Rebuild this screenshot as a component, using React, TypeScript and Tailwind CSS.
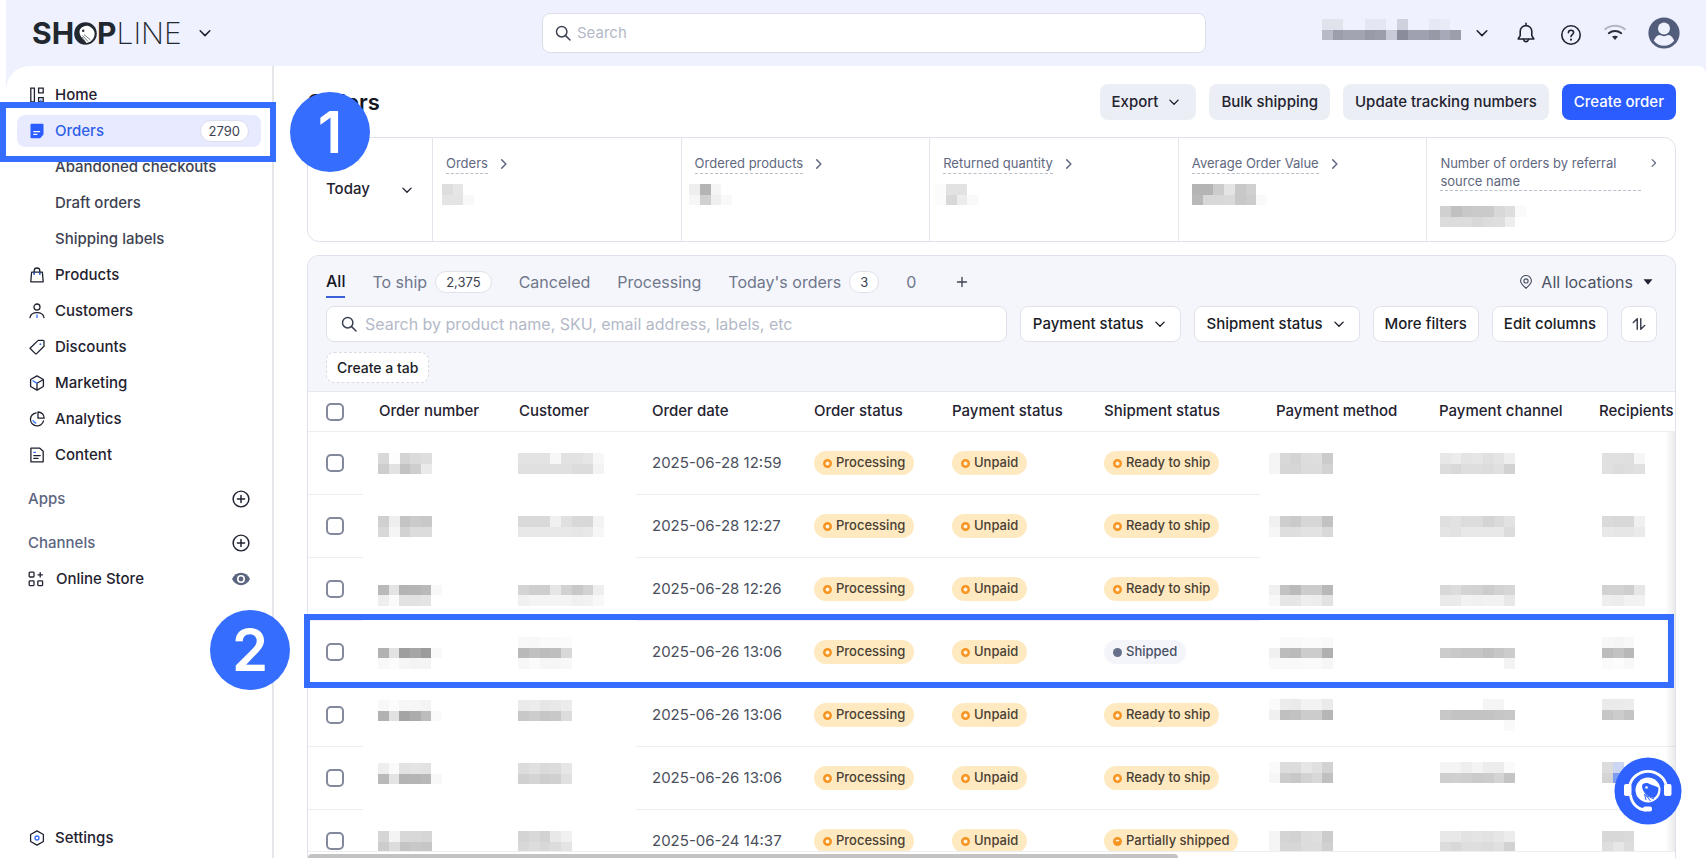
import type { ReactNode } from "react";

const BLOCK = 11;

// Redacted value, each string is a row of two digit grey levels
const Mosaic = ({ rows, className = "" }: { rows: string[]; className?: string }) => {
  const grid = rows.map((row) => row.split(" "));
  const cols = Math.max(...grid.map((row) => row.length));
  return (
    <svg
      className={`block shrink-0 ${className}`}
      width={Math.round(cols * 10.73)}
      height={Math.round(rows.length * 10.73)}
      viewBox={`0 0 ${cols * BLOCK} ${rows.length * BLOCK}`}
      preserveAspectRatio="none"
      shapeRendering="crispEdges"
      aria-hidden="true"
    >
      {grid.map((row, y) =>
        row.map((level, x) =>
          level === "--" ? null : (
            <rect
              key={`${x}-${y}`}
              x={x * BLOCK}
              y={y * BLOCK}
              width={BLOCK}
              height={BLOCK}
              fill={level.length === 2 ? `#${level}${level}${level}` : `#${level}`}
            />
          )
        )
      )}
    </svg>
  );
};

const Icon = ({ children, size = 16, className = "" }: { children: ReactNode; size?: number; className?: string }) => (
  <svg
    width={size}
    height={size}
    viewBox="0 0 16 16"
    fill="none"
    stroke="currentColor"
    strokeWidth="1.3"
    strokeLinecap="round"
    strokeLinejoin="round"
    className={`shrink-0 ${className}`}
    aria-hidden="true"
  >
    {children}
  </svg>
);

const ChevronDown = ({ size = 12, className = "" }: { size?: number; className?: string }) => (
  <Icon size={size} className={className}>
    <path d="M2.5 5.5 8 11l5.5-5.5" strokeWidth="1.8" />
  </Icon>
);

const ChevronRight = ({ size = 12, className = "" }: { size?: number; className?: string }) => (
  <Icon size={size} className={className}>
    <path d="M5 2.5 10.5 8 5 13.5" strokeWidth="1.9" />
  </Icon>
);

const SearchIcon = ({ className = "" }: { className?: string }) => (
  <Icon size={16} className={className}>
    <circle cx="6.7" cy="6.7" r="5.2" strokeWidth="1.5" />
    <path d="m10.6 10.6 4.4 4.4" strokeWidth="1.5" />
  </Icon>
);

const PlusCircle = () => (
  <Icon size={18}>
    <circle cx="8" cy="8" r="7" />
    <path d="M8 4.8v6.4M4.8 8h6.4" />
  </Icon>
);

const icons = {
  home: (
    <Icon>
      <path d="M1.8 1.2h3.6v13.6H1.8zM9.6 1.2h4.6v4.6H9.6z" strokeLinejoin="miter" />
      <path d="M9.6 14.8V10.6h4.6v4.2z" strokeLinejoin="miter" />
      <path d="M11.9 13v1.8" stroke="#356dff" />
    </Icon>
  ),
  orders: (
    <Icon>
      <path d="M2.4.8h11.2c.5 0 .9.4.9.9v9.8l-3.4 3.7H2.4a.9.9 0 0 1-.9-.9V1.7c0-.5.4-.9.9-.9z" fill="#2b5cff" stroke="none" />
      <path d="M4.8 8.6h5.8M4.8 11.4h3" stroke="#fff" />
    </Icon>
  ),
  products: (
    <Icon>
      <path d="M2.6 5.2h10.8l.8 9.6H1.8z" />
      <path d="M5.2 7V3.8a2.8 2.8 0 0 1 5.6 0V7" />
      <path d="M5.2 5.8v1.4M10.8 5.8v1.4" stroke="#356dff" />
    </Icon>
  ),
  customers: (
    <Icon>
      <circle cx="8" cy="4" r="3" />
      <path d="M1 14.6c.6-3.4 3.3-5 7-5s6.400 1.600 7 5" />
      <path d="M8 12v2.400" stroke="#356dff" />
    </Icon>
  ),
  discounts: (
    <Icon>
      <path d="M9.2 1.4h4.9c.5 0 .9.4.9.9v4.9l-7.4 7.4c-.4.4-.9.4-1.3 0L1 9.300z" />
      <path d="M11.300 5.200h.1" stroke="#356dff" strokeWidth="1.8" />
    </Icon>
  ),
  marketing: (
    <Icon>
      <path d="M8 .9 14.400 4.500v7L8 15.100 1.600 11.500v-7z" />
      <path d="M14 4.800 8 8.200v6.600" />
      <path d="M4 5.900 8 8.200" stroke="#356dff" />
    </Icon>
  ),
  analytics: (
    <Icon>
      <path d="M7.2 1.8a6.6 6.6 0 1 0 7.3 8" />
      <path d="M9 1v6.200h6.200C15.200 3.800 12.400 1 9 1z" />
      <path d="M4 9.600c.5 1.300 1.400 2.100 2.700 2.400" stroke="#356dff" />
    </Icon>
  ),
  content: (
    <Icon>
      <path d="M1.900 1.200h8.900l3.400 3v10.600H1.900z" />
      <path d="M4.800 8.600h6.400M4.800 11.400h4.200" />
      <path d="M4.800 5.400h1.600" stroke="#356dff" />
    </Icon>
  ),
  store: (
    <Icon>
      <rect x="1.2" y="1.2" width="4.8" height="4.8" rx=".8" />
      <rect x="1.2" y="9.8" width="4.8" height="4.8" rx=".8" />
      <rect x="9.8" y="9.8" width="4.8" height="4.8" rx=".8" />
      <path d="M12.200 1.600v4.400M10 3.800h4.400" />
    </Icon>
  ),
  settings: (
    <Icon>
      <path d="M8 .9 14.400 4.500v7L8 15.100 1.600 11.500v-7z" />
      <circle cx="8" cy="8" r="2" stroke="#356dff" />
    </Icon>
  ),
};

const NavItem = ({ icon, label, sub = false }: { icon?: ReactNode; label: string; sub?: boolean }) => (
  <a href="#" className={`flex h-8 items-center gap-2.5 px-3 ${sub ? "text-[#3d4252]" : "text-[#1f2230]"}`}>
    {icon ?? <span className="w-4" />}
    {label}
  </a>
);

const Sidebar = () => (
  <aside className="flex w-[268px] shrink-0 flex-col border-r-2 border-[#e6e7ea] px-[11px] pt-[13px] pb-1 text-[15px] font-medium text-[#1f2230]">
    <nav className="flex flex-col gap-1">
      <NavItem icon={icons.home} label="Home" />
      <a href="#" className="flex h-8 items-center gap-2.5 rounded-lg bg-[#e8ebff] px-3 text-[#2f5fe8]">
        {icons.orders}
        Orders
        <span className="ml-auto rounded-full border border-[#dcdfee] bg-white px-2 text-[13px] leading-5 font-normal text-[#3d4252]">
          2790
        </span>
      </a>
      <NavItem sub label="Abandoned checkouts" />
      <NavItem sub label="Draft orders" />
      <NavItem sub label="Shipping labels" />
      <NavItem icon={icons.products} label="Products" />
      <NavItem icon={icons.customers} label="Customers" />
      <NavItem icon={icons.discounts} label="Discounts" />
      <NavItem icon={icons.marketing} label="Marketing" />
      <NavItem icon={icons.analytics} label="Analytics" />
      <NavItem icon={icons.content} label="Content" />
    </nav>
    <div className="mt-3 flex h-8 items-center justify-between px-[11px] text-[#5b6580]">
      Apps
      <button aria-label="Add app" className="text-[#1f2230]"><PlusCircle /></button>
    </div>
    <div className="mt-3 flex h-8 items-center justify-between px-[11px] text-[#5b6580]">
      Channels
      <button aria-label="Add channel" className="text-[#1f2230]"><PlusCircle /></button>
    </div>
    <div className="mt-1 flex h-8 items-center gap-3 px-[11px]">
      {icons.store}
      <a href="#">Online Store</a>
      <button aria-label="View store" className="ml-auto">
        <svg width="18" height="18" viewBox="0 0 18 18" aria-hidden="true">
          <path d="M0 9c2-4 5.200-6.200 9-6.200S16 5 18 9c-2 4-5.200 6.200-9 6.200S2 13 0 9z" fill="#5b6580" />
          <circle cx="9" cy="9" r="4" fill="#fff" />
          <circle cx="9" cy="9" r="2.4" fill="#5b6580" />
        </svg>
      </button>
    </div>
    <div className="mt-auto">
      <NavItem icon={icons.settings} label="Settings" />
    </div>
  </aside>
);

const Logo = () => (
  <a href="#" aria-label="SHOPLINE" className="flex items-center text-[30px] leading-8 text-[#22282f]">
    <span className="font-bold">SH</span>
    <svg width="23" height="23" viewBox="0 0 23 23" aria-hidden="true">
      <circle cx="11.5" cy="11.5" r="11.3" fill="#22282f" />
      <path d="M6 7.500C8 4.500 12 3.200 15 4.200c3 1.400 5.600 3.800 5.600 7.600 0 4.500-3.400 8.600-8.100 9.200-1-.8-3.500-3.400-5.500-6.400C5.500 12 5 9.500 6 7.500z" fill="#fff" />
      <circle cx="9.2" cy="8.800" r="1.2" fill="#22282f" />
      <path d="m8.500 13.500 5.500 6M10 12.500l6.500 5.500M8 15l3.500 5" stroke="#22282f" strokeWidth=".6" />
    </svg>
    <span className="font-bold">P</span>
    <span className="font-extralight">LINE</span>
  </a>
);

const TopBar = () => (
  <header className="flex h-[66px] shrink-0 items-center justify-between bg-[#eff1ff] px-[26px]">
    <div className="flex w-[510px] items-center gap-4 text-[#1f2230]">
      <Logo />
      <button aria-label="Switch store"><ChevronDown size={14} /></button>
    </div>
    <label className="flex h-10 w-[664px] items-center gap-1.5 rounded-lg border border-[#dcdfe9] bg-white px-3 text-[#3d4252]">
      <SearchIcon />
      <input type="search" aria-label="Search" placeholder="Search" className="w-full text-[15px] outline-none placeholder:text-[#b4b9c8]" />
    </label>
    <div className="flex flex-1 items-center justify-end text-[#1f2230]">
      <Mosaic
        className="mb-2"
        rows={[
          "e0e2ec e0e2ec -- -- e4e6f2 e4e6f2 -- cfd1dd -- -- e6e8f3 e8eaf5 --",
          "b9bac8 9d9eac a3a4b2 a3a4b2 999aa8 9d9eac c9cad8 8b8c9b a0a1b0 a0a1b0 9899a7 a8a9b8 9d9eac",
        ]}
      />
      <button aria-label="Account menu" className="ml-3.5"><ChevronDown size={14} /></button>
      <button aria-label="Notifications" className="ml-[27px]">
        <svg width="20" height="22" viewBox="0 0 20 22" fill="none" stroke="currentColor" strokeWidth="1.6" strokeLinejoin="round" strokeLinecap="round" aria-hidden="true">
          <path d="M10 1.200v1.600M4.200 9.400a5.800 5.800 0 0 1 11.600 0v4.200l2 3.400H2.200l2-3.400z" />
          <path d="M7.400 17.400c.4 1.500 1.300 2.200 2.600 2.200s2.200-.7 2.600-2.200" />
        </svg>
      </button>
      <button aria-label="Help" className="ml-6">
        <svg width="22" height="22" viewBox="0 0 22 22" fill="none" stroke="currentColor" strokeWidth="1.6" strokeLinecap="round" className="mt-1" aria-hidden="true">
          <circle cx="11" cy="11" r="9.2" />
          <path d="M8.400 8.800c0-1.600 1.100-2.600 2.600-2.600s2.600 1 2.600 2.400c0 2-2.600 2-2.600 4" />
          <path d="M11 15.600v.1" strokeWidth="2" />
        </svg>
      </button>
      <button aria-label="Network" className="ml-[22px]">
        <svg width="22" height="20" viewBox="0 0 22 20" fill="none" strokeWidth="2" strokeLinecap="round" aria-hidden="true">
          <path d="M1.200 6.200c5.600-4.600 14-4.600 19.600 0" stroke="#b3b5c2" />
          <path d="M4.800 10.200c3.600-2.800 8.800-2.800 12.400 0" stroke="#2a2d3a" />
          <path d="M8 13.600c1.800-1.300 4.200-1.300 6 0l-3 3.400z" fill="#2a2d3a" stroke="none" />
        </svg>
      </button>
      <button aria-label="Profile" className="ml-[22px]">
        <svg width="32" height="32" viewBox="0 0 32 32" aria-hidden="true">
          <circle cx="16" cy="16" r="15.6" fill="#515d7b" />
          <circle cx="16" cy="11.5" r="6" fill="#eff1ff" />
          <path d="M5.800 23.800C7.500 20.200 9.200 18 11.400 18c1.400 0 2.600 1.200 4.600 1.200s3.200-1.200 4.600-1.200c2.200 0 3.900 2.200 5.600 5.800a13 13 0 0 1-20.400 0z" fill="#eff1ff" />
        </svg>
      </button>
    </div>
  </header>
);

const stats = [
  { label: "Orders", rows: ["de e6 --", "e4 e4 f8"], pull: "-ml-1" },
  { label: "Ordered products", rows: ["ee b4 f5 --", "f6 d0 ef f9"], pull: "-ml-1.5" },
  { label: "Returned quantity", rows: ["fb e2 e2 --", "fb d8 ec f9"], pull: "-ml-2" },
  { label: "Average Order Value", rows: ["b4 b4 cc e4 c8 d0 --", "b8 d8 d8 da c8 cc f9"], pull: "" },
];

const StatsCard = () => (
  <section className="mt-[17px] flex h-[105px] rounded-xl border border-[#dfe2ea] bg-white">
    <button className="flex w-[124px] shrink-0 items-center justify-between pr-[19px] pl-[18px] text-[15px] font-medium text-[#1f2230]">
      Today
      <ChevronDown size={12} />
    </button>
    <div className="grid flex-1 grid-cols-5 *:border-l *:border-[#e3e6ec] *:pt-[15px] *:pl-[13px]">
      {stats.map((stat) => (
        <div key={stat.label}>
          <a href="#" className="flex items-center gap-2.5 text-[13px] text-[#5f6880]">
            <span className="border-b border-dashed border-[#b9becb] leading-5">{stat.label}</span>
            <ChevronRight />
          </a>
          <Mosaic rows={stat.rows} className={`mt-2.5 ${stat.pull}`} />
        </div>
      ))}
      <div className="pr-4">
        <a href="#" className="flex items-start justify-between gap-2 text-[13px] text-[#5f6880]">
          <span className="w-[203px] border-b border-dashed border-[#b9becb] pt-px leading-[18px]">
            Number of orders by referral source name
          </span>
          <ChevronRight size={10} className="mt-[5px]" />
        </a>
        <Mosaic rows={["d0 c0 c8 ca ca d8 de fa", "dc dc dc d8 dc de ee --"]} className="mt-[15px]" />
      </div>
    </div>
  </section>
);

const CountBadge = ({ children }: { children: ReactNode }) => (
  <span className="rounded-full border border-[#dfe2ea] bg-white px-2.5 text-[13px] leading-5 text-[#3d4252]">{children}</span>
);

const Toolbar = () => (
  <div className="h-[136px] shrink-0 border-b border-[#e6e8ef] bg-[#f5f6fb] px-[18px] pt-2.5">
    <div className="flex h-8 items-center text-base text-[#6f778c]">
      <button className="h-8 border-b-2 border-[#3a62d8] font-medium text-[#14161f]">All</button>
      <button className="ml-[27px] flex items-center gap-2">To ship <CountBadge>2,375</CountBadge></button>
      <button className="ml-[27px]">Canceled</button>
      <button className="ml-[27px]">Processing</button>
      <button className="ml-[27px] flex items-center gap-2">Today's orders <CountBadge>3</CountBadge></button>
      <button className="ml-[27px]">0</button>
      <button aria-label="Add tab" className="ml-10 text-[#3d4252]">
        <Icon size={12}><path d="M8 2v12M2 8h12" strokeWidth="1.8" /></Icon>
      </button>
      <button className="ml-auto flex items-center gap-2 pr-1 text-[#4a5163]">
        <Icon size={14}>
          <path d="M8 15.200C4.400 12 1.800 9.600 1.800 6.800a6.200 6.200 0 0 1 12.400 0c0 2.800-2.600 5.200-6.200 8.400z" />
          <circle cx="8" cy="6.8" r="2.4" />
        </Icon>
        All locations
        <svg width="10" height="6" viewBox="0 0 10 6" className="ml-0.5" aria-hidden="true"><path d="M.5.3h9L5 5.700z" fill="#1f2230" /></svg>
      </button>
    </div>
    <div className="mt-2 flex gap-[13px] text-[15px] font-medium text-[#1a1c26]">
      <label className="flex h-9 flex-1 items-center gap-2 rounded-lg border border-[#dfe2ea] bg-white px-3.5 text-[#3d4252]">
        <SearchIcon />
        <input
          type="search"
          aria-label="Search orders"
          placeholder="Search by product name, SKU, email address, labels, etc"
          className="w-full text-base font-normal outline-none placeholder:text-[#b4b9c8]"
        />
      </label>
      <button className="flex h-9 items-center gap-2.5 rounded-lg border border-[#dfe2ea] bg-white pr-3.5 pl-3">Payment status <ChevronDown size={12} /></button>
      <button className="flex h-9 items-center gap-2.5 rounded-lg border border-[#dfe2ea] bg-white pr-3.5 pl-3">Shipment status <ChevronDown size={12} /></button>
      <button className="h-9 rounded-lg border border-[#dfe2ea] bg-white px-[11px]">More filters</button>
      <button className="h-9 rounded-lg border border-[#dfe2ea] bg-white px-[11px]">Edit columns</button>
      <button aria-label="Sort" className="flex size-9 items-center justify-center rounded-lg border border-[#dfe2ea] bg-white text-[#3d4252]">
        <Icon size={14}><path d="M6 14V2L1.500 6.200M10 2v12l4.500-4.200" strokeWidth="1.7" /></Icon>
      </button>
    </div>
    <button className="mt-2.5 block h-[31px] rounded-lg border border-dashed border-[#d8dbe4] bg-white px-2.5 text-sm font-medium text-[#1a1c26]">
      Create a tab
    </button>
  </div>
);

type Order = {
  date: string;
  shipment: "Ready to ship" | "Shipped" | "Partially shipped";
  number: string[];
  customer: string[];
  method: string[];
  channel: string[];
  recipient: string[];
};

const orders: Order[] = [
  {
    date: "2025-06-28 12:59",
    shipment: "Ready to ship",
    number: ["d8 fd d4 db de", "cd e2 c3 ce ea"],
    customer: ["e3 e3 e3 f7 e2 e2 e6 f7", "e0 e0 e0 e0 e0 dc dc f3"],
    method: ["f5 d8 d4 dd de cb", "f5 d6 d6 dc dc d2"],
    channel: ["e7 ec e4 e6 e0 e4 ee", "dc d8 de de dc e0 d2"],
    recipient: ["e0 e0 df f6", "e0 dc de e0"],
  },
  {
    date: "2025-06-28 12:27",
    shipment: "Ready to ship",
    number: ["d0 ee c4 cb c8", "d8 f5 d2 dc dc"],
    customer: ["d9 d9 d9 f0 e0 d8 d8 f3", "e8 e8 e8 e8 e8 e6 e8 f6"],
    method: ["f0 ce ca d6 d6 c2", "f6 de de e2 e2 d8"],
    channel: ["df e2 dc dc d4 da e2", "e4 e2 e8 e8 e8 e8 dc"],
    recipient: ["da d8 d8 f0", "e8 e6 e6 ea"],
  },
  {
    date: "2025-06-28 12:26",
    shipment: "Ready to ship",
    number: ["-- -- -- -- -- --", "b9 e4 b4 b5 b9 f8", "ee fa e2 e2 e4 --"],
    customer: ["-- -- -- -- -- -- -- --", "d4 ce ce e6 d2 c8 d2 ee", "f0 f4 f4 f4 f4 f0 f2 f8"],
    method: ["-- -- -- -- -- --", "f0 c2 ba cc cc b8", "f8 e6 e6 ee ec e2"],
    channel: ["-- -- -- -- -- -- --", "d8 dc d4 d2 cc d2 d6", "ea ea f2 f0 f2 f2 e8"],
    recipient: ["-- -- -- --", "d2 d2 ce e6", "ee ec f2 f2"],
  },
  {
    date: "2025-06-26 13:06",
    shipment: "Shipped",
    number: ["-- -- -- -- -- --", "b2 e2 9e a6 9c f9", "f8 fc f6 f4 f4 --"],
    customer: ["f8 f7 fa fa fb", "b9 c0 bc be d8", "f7 fb f6 f6 f8"],
    method: ["-- f9 f9 fb fb f9", "f0 bc ba cc cc b0", "f9 f9 f9 fa fa f6"],
    channel: ["-- -- -- -- -- -- --", "cc c9 c6 c6 c0 c6 cc", "-- -- -- -- -- -- f3"],
    recipient: ["f7 f5 f8 --", "bc c2 b8 --", "fa fc f8 --"],
  },
  {
    date: "2025-06-26 13:06",
    shipment: "Ready to ship",
    number: ["f8 fc f6 f6 f4 --", "b2 e2 a4 ac bc fa", "-- -- -- -- --"],
    customer: ["ea ec e6 e8 ec", "c8 cc c6 c8 dc", "-- -- -- -- --"],
    method: ["fa ec ea f2 f2 ea", "f0 c0 c2 cc cc b6", "-- -- -- -- --"],
    channel: ["-- -- -- -- f5 f5 --", "c8 c3 c3 c3 c3 c6 c8", "-- -- -- -- -- -- f9"],
    recipient: ["ea ea ec --", "c6 cc c4 --", "-- -- -- --"],
  },
  {
    date: "2025-06-26 13:06",
    shipment: "Ready to ship",
    number: ["ee fa e2 e4 e2 --", "b9 e4 b4 b5 b8 f8", "-- -- -- -- --"],
    customer: ["dc e0 da dc e6", "d0 d4 ce d0 e0", "-- -- -- -- --"],
    method: ["fa dc dc e6 e0 d2", "f6 cc c8 d2 d8 c0", "-- -- -- -- --"],
    channel: ["f4 f4 ee f4 ec ec fa", "ce d0 ce ca cc d4 c4", "-- -- -- -- -- --"],
    recipient: ["dc ccd6f2 -- --", "d4 7d9bf0 -- --", "-- -- -- --"],
  },
  {
    date: "2025-06-24 14:37",
    shipment: "Partially shipped",
    number: ["d6 f4 d8 d8 d6", "cc dc c4 c8 c6"],
    customer: ["d4 d8 d2 e8 f0", "d8 dc d8 dc e4"],
    method: ["f5 d4 d2 dc de cc", "f5 d6 d6 dc dc d0"],
    channel: ["e8 e8 e2 e4 e2 e6 ec", "dc d8 de de dc e0 d2"],
    recipient: ["d8 d8 da --", "de e6 dc --"],
  },
];

const Dot = ({ kind }: { kind: "open" | "full" | "partial" }) => (
  <svg width="9" height="9" viewBox="0 0 10 10" aria-hidden="true">
    {kind === "full" ? (
      <circle cx="5" cy="5" r="5" fill="#66708a" />
    ) : (
      <circle cx="5" cy="5" r="3.6" fill="#fff3dc" stroke="#f79320" strokeWidth="2.7" />
    )}
    {kind === "partial" && <path d="M1 4.600a4 4 0 0 0 8 0z" fill="#f79320" />}
  </svg>
);

const Tag = ({ children, kind = "open" }: { children: ReactNode; kind?: "open" | "full" | "partial" }) => (
  <span
    className={`inline-flex h-6 items-center gap-1 rounded-full px-[9px] text-[13px] font-medium ${
      kind === "full" ? "bg-[#f4f5fa] text-[#4a5163]" : "bg-[#ffe9c0] text-[#4a4034]"
    }`}
  >
    <Dot kind={kind} />
    {children}
  </span>
);

const shipmentDot = { "Ready to ship": "open", Shipped: "full", "Partially shipped": "partial" } as const;

const Checkbox = ({ label }: { label: string }) => (
  <input type="checkbox" aria-label={label} className="block size-[18px] appearance-none rounded-[5px] border-2 border-[#83899c] bg-white" />
);

const OrdersTable = () => (
  <table className="w-full table-fixed border-separate border-spacing-0 text-left text-[15px] text-[#4a4f5c]">
    <colgroup>
      <col className="w-[55px]" />
      <col className="w-[140px]" />
      <col className="w-[133px]" />
      <col className="w-[162px]" />
      <col className="w-[138px]" />
      <col className="w-[152px]" />
      <col className="w-[172px]" />
      <col className="w-[163px]" />
      <col className="w-[164px]" />
      <col />
    </colgroup>
    <thead>
      <tr className="h-10 whitespace-nowrap text-[#1f2230] *:border-b *:border-[#eceef2] *:font-medium">
        <th className="pl-[18px]"><Checkbox label="Select all orders" /></th>
        <th className="pl-4">Order number</th>
        <th className="pl-4">Customer</th>
        <th className="pl-4">Order date</th>
        <th className="pl-4">Order status</th>
        <th className="pl-4">Payment status</th>
        <th className="pl-4">Shipment status</th>
        <th className="pl-4">Payment method</th>
        <th className="pl-4">Payment channel</th>
        <th className="pl-3">Recipients</th>
      </tr>
    </thead>
    <tbody>
      {orders.map((order, i) => {
        const line = "border-b border-[#eceef2]";
        const right = i > 3 ? line : "";
        return (
          <tr key={i} className="h-[63px]">
            <td className={`pl-[18px] ${line}`}><Checkbox label={`Select order from ${order.date}`} /></td>
            <td className="pl-[15px]"><Mosaic rows={order.number} /></td>
            <td className="pl-[15px]"><Mosaic rows={order.customer} /></td>
            <td className={`pl-4 ${line}`}>{order.date}</td>
            <td className={`pl-4 ${line}`}><Tag>Processing</Tag></td>
            <td className={`pl-4 ${line}`}><Tag>Unpaid</Tag></td>
            <td className={`pl-4 whitespace-nowrap ${line}`}><Tag kind={shipmentDot[order.shipment]}>{order.shipment}</Tag></td>
            <td className={`pl-[9px] ${right}`}><Mosaic rows={order.method} /></td>
            <td className={`pl-[17px] ${right}`}><Mosaic rows={order.channel} /></td>
            <td className={`pl-[15px] ${right}`}><Mosaic rows={order.recipient} /></td>
          </tr>
        );
      })}
    </tbody>
  </table>
);

const OrdersPage = () => (
  <main className="flex min-w-0 flex-1 flex-col pt-[18px] pr-[30px] pl-[33px]">
    <div className="flex items-center gap-[13px] text-[15px] font-medium text-[#1f2230]">
      <h1 className="mr-auto text-[22px] font-semibold text-[#14161f]">Orders</h1>
      <button className="flex h-9 items-center gap-2.5 rounded-lg bg-[#eceef5] pr-4 pl-3">Export <ChevronDown /></button>
      <button className="h-9 rounded-lg bg-[#eceef5] px-3">Bulk shipping</button>
      <button className="h-9 rounded-lg bg-[#eceef5] px-3">Update tracking numbers</button>
      <button className="h-9 rounded-lg bg-[#2b5cff] px-3 text-white">Create order</button>
    </div>
    <StatsCard />
    <section className="mt-[13px] flex min-h-0 flex-1 flex-col overflow-hidden rounded-t-xl border border-b-0 border-[#dfe2ea]">
      <Toolbar />
      <div className="relative min-h-0 flex-1 overflow-hidden">
        <OrdersTable />
        <div className="absolute top-10 right-0 bottom-0 w-2.5 bg-linear-to-l from-black/8 to-transparent" />
      </div>
      <div className="shrink-0 border-t border-[#eceef2] bg-white pt-0.5">
        <div className="h-1 w-[870px] rounded-t-lg bg-[#c3c3c3]" />
      </div>
    </section>
  </main>
);

const SupportButton = () => (
  <button aria-label="Support chat" className="absolute right-6 bottom-[33px]">
    <svg width="68" height="68" viewBox="0 0 68 68" fill="none" aria-hidden="true">
      <circle cx="34" cy="34" r="33.5" fill="#2f61ff" />
      <path d="M15.500 29a19 19 0 0 1 37 0" stroke="#fff" strokeWidth="2.8" />
      <rect x="10" y="27" width="7.5" height="12" rx="2" fill="#fff" />
      <rect x="50" y="27" width="7.5" height="12" rx="2" fill="#fff" />
      <path d="M16.500 38c1 8 6.500 14.500 15 15" stroke="#fff" strokeWidth="2.8" />
      <rect x="29" y="49.5" width="9" height="5" rx="2" fill="#fff" />
      <circle cx="34" cy="33" r="12.5" fill="#fff" />
      <path d="M28 29c0-2.500 3-3.500 5.500-3 3.500 2.200 7 2.600 10.800 4.400.6 4-1 8.100-4.300 10.600-3.500-1-7-2-9-4.500-1.500-2-3-5-3-7.500z" fill="#2f61ff" />
      <circle cx="32.5" cy="30.500" r="1.3" fill="#fff" />
      <path d="m30.500 37 1.500 6M32.500 39l4 5M31 38l9 4" stroke="#2f61ff" strokeWidth="1" />
    </svg>
  </button>
);

const Step = ({ children, className }: { children: ReactNode; className: string }) => (
  <div className={`absolute flex size-20 items-center justify-center rounded-full bg-[#356dff] text-[58px] font-semibold text-white ${className}`}>
    {children}
  </div>
);

export default function App() {
  return (
    <div className="relative flex h-screen flex-col overflow-hidden bg-white pl-1.5 font-['Inter','Liberation_Sans',sans-serif]">
      <TopBar />
      <div className="min-h-0 flex-1 bg-[#eff1ff]">
        <div className="flex h-full rounded-tl-[24px] rounded-tr-lg bg-white">
          <Sidebar />
          <OrdersPage />
        </div>
      </div>

      <SupportButton />

      {/* walkthrough steps */}
      <div className="absolute top-[102px] left-0 h-[60px] w-[276px] border-[6px] border-[#356dff]" />
      <Step className="top-[92px] left-[290px]">1</Step>
      <div className="absolute top-[614px] right-8 left-[304px] h-[74px] border-[6px] border-[#356dff]" />
      <Step className="top-[610px] left-[210px]">2</Step>
    </div>
  );
}
